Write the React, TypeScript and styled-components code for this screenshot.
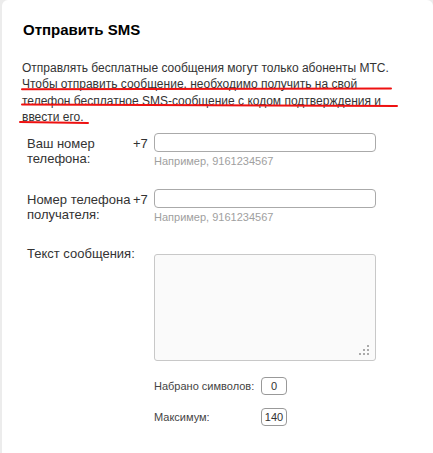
import React from "react";
import styled, { createGlobalStyle } from "styled-components";

const GlobalStyle = createGlobalStyle`
  html, body {
    margin: 0;
    padding: 0;
    background: #ececec;
    font-family: "Liberation Sans", Arial, sans-serif;
  }
  * { box-sizing: border-box; }
`;

const Card = styled.div`
  position: relative;
  margin-left: 2px;
  min-height: 453px;
  background: #ffffff;
  border-radius: 6px 6px 0 0;
  padding: 21px 0 0 20px;
`;

const Title = styled.h2`
  margin: 0 0 0 1px;
  font-size: 15px;
  line-height: 17px;
  font-weight: bold;
  color: #000;
`;

const Intro = styled.p`
  margin: 22px 0 0;
  width: 390px;
  font-size: 12px;
  line-height: 16.3px;
  color: #333;
`;

const Marks = styled.svg`
  position: absolute;
  left: 0;
  top: 0;
  pointer-events: none;
`;

const Form = styled.form`
  margin: 8px 0 0;
  padding-left: 5px;
`;

const Row = styled.div<{ $gap: number }>`
  display: grid;
  grid-template-columns: 106px 21px 222px;
  align-items: start;
  margin-bottom: ${(p) => p.$gap}px;
`;

const Label = styled.label<{ $top: number; $wide?: boolean }>`
  grid-column: ${(p) => (p.$wide ? "1 / 3" : "1")};
  grid-row: 1;
  margin-top: ${(p) => p.$top}px;
  font-size: 13px;
  line-height: 15px;
  color: #333;
`;

const Prefix = styled.span`
  grid-column: 2;
  margin-top: 3px;
  font-size: 13px;
  line-height: 15px;
  color: #333;
`;

const Field = styled.div<{ $top?: number }>`
  grid-column: 3;
  grid-row: 1;
  display: flex;
  flex-direction: column;
  margin-top: ${(p) => p.$top ?? 0}px;
`;

const Input = styled.input`
  width: 222px;
  height: 19px;
  margin: 0;
  padding: 0 4px;
  border: 1px solid #aaa;
  border-radius: 4px;
  background: #fff;
  font: 12px "Liberation Sans", Arial, sans-serif;
`;

const Hint = styled.span`
  margin-top: 3px;
  font-size: 11px;
  line-height: 13px;
  color: #a0a0a0;
`;

const AreaBox = styled.div`
  position: relative;
  width: 222px;
  height: 107px;
`;

const TextArea = styled.textarea`
  display: block;
  width: 222px;
  height: 107px;
  margin: 0;
  padding: 4px;
  border: 1px solid #c8c8c8;
  border-radius: 3px;
  background: #fafafa;
  resize: none;
  font: 12px "Liberation Sans", Arial, sans-serif;
`;

const Grip = styled.svg`
  position: absolute;
  right: 7px;
  bottom: 6px;
  pointer-events: none;
`;

const Counters = styled.div`
  margin: 16px 0 0 127px;
  display: flex;
  flex-direction: column;
  gap: 13px;
`;

const CounterRow = styled.div`
  display: flex;
  align-items: center;
`;

const CounterLabel = styled.span`
  width: 107px;
  font-size: 11px;
  line-height: 13px;
  color: #444;
`;

const CounterBox = styled.span`
  display: inline-flex;
  align-items: center;
  justify-content: center;
  width: 26px;
  height: 18px;
  border: 1px solid #999;
  border-radius: 4px;
  font-size: 11px;
  color: #333;
`;

export default function App() {
  return (
    <>
      <GlobalStyle />
      <Card>
        <Title>Отправить SMS</Title>
        <Intro>
          Отправлять бесплатные сообщения могут только абоненты МТС.
          <br />
          Чтобы отправить сообщение, необходимо получить на свой
          <br />
          телефон бесплатное SMS-сообщение с кодом подтверждения и
          <br />
          ввести его.
        </Intro>
        <Marks width="431" height="130" viewBox="0 0 431 130">
          <path d="M20 89.2 Q 200 89.4 389 88.4" stroke="#ee1111" strokeWidth="2" fill="none" strokeLinecap="round" />
          <path d="M20 104.6 Q 200 105 395 106" stroke="#ee1111" strokeWidth="2" fill="none" strokeLinecap="round" />
          <path d="M18 122 L86 123" stroke="#ee1111" strokeWidth="2" fill="none" strokeLinecap="round" />
        </Marks>
        <Form onSubmit={(e) => e.preventDefault()}>
          <Row $gap={21}>
            <Label $top={3} htmlFor="from">Ваш номер телефона:</Label>
            <Prefix>+7</Prefix>
            <Field>
              <Input id="from" type="text" />
              <Hint>Например, 9161234567</Hint>
            </Field>
          </Row>
          <Row $gap={21}>
            <Label $top={3} htmlFor="to">Номер телефона получателя:</Label>
            <Prefix>+7</Prefix>
            <Field>
              <Input id="to" type="text" />
              <Hint>Например, 9161234567</Hint>
            </Field>
          </Row>
          <Row $gap={0}>
            <Label $top={1} $wide htmlFor="msg">Текст сообщения:</Label>
            <Field $top={9}>
              <AreaBox>
                <TextArea id="msg" />
                <Grip width="10" height="10" viewBox="0 0 10 10">
                  <rect x="8" y="0" width="2" height="2" fill="#aaa" />
                  <rect x="4" y="4" width="2" height="2" fill="#aaa" />
                  <rect x="8" y="4" width="2" height="2" fill="#aaa" />
                  <rect x="0" y="8" width="2" height="2" fill="#aaa" />
                  <rect x="4" y="8" width="2" height="2" fill="#aaa" />
                  <rect x="8" y="8" width="2" height="2" fill="#aaa" />
                </Grip>
              </AreaBox>
            </Field>
          </Row>
          <Counters>
            <CounterRow>
              <CounterLabel>Набрано символов:</CounterLabel>
              <CounterBox>0</CounterBox>
            </CounterRow>
            <CounterRow>
              <CounterLabel>Максимум:</CounterLabel>
              <CounterBox>140</CounterBox>
            </CounterRow>
          </Counters>
        </Form>
      </Card>
    </>
  );
}
